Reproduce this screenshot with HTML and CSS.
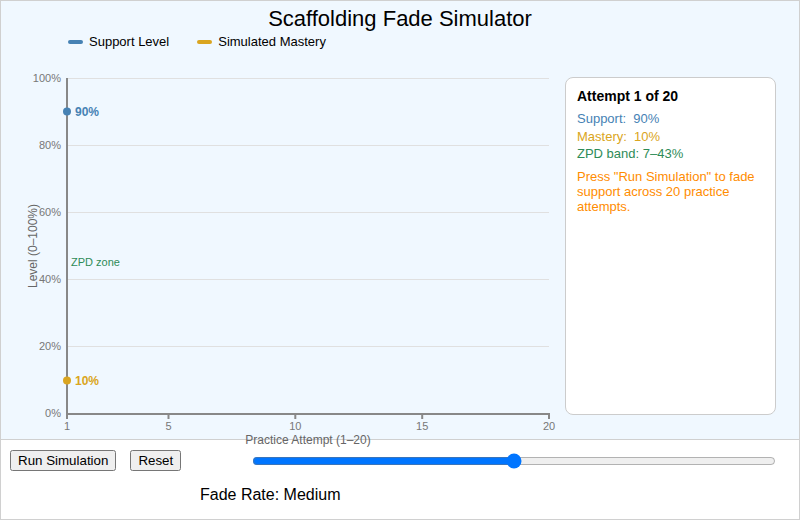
FILE: index.html
```html
<!DOCTYPE html>
<html>
<head>
    <title>Scaffolding Fade Simulator</title>
    <link rel="stylesheet" href="styles.css">
</head>
<body>
    <div class="app">
        <div class="sim-top">
            <h1 class="title">Scaffolding Fade Simulator</h1>

            <div class="legend">
                <span class="swatch support"></span><span class="legend-text">Support Level</span>
                <span class="swatch mastery"></span><span class="legend-text">Simulated Mastery</span>
            </div>

            <div class="chart-row">
                <!-- Chart: x = attempts 1..20, y = level 0..100% -->
                <svg class="chart" width="555" height="388" viewBox="0 0 555 388">
                    <g class="grid">
                        <line x1="66" y1="28.5" x2="548" y2="28.5"/>
                        <line x1="66" y1="95.5" x2="548" y2="95.5"/>
                        <line x1="66" y1="162.5" x2="548" y2="162.5"/>
                        <line x1="66" y1="229.5" x2="548" y2="229.5"/>
                        <line x1="66" y1="296.5" x2="548" y2="296.5"/>
                    </g>

                    <g class="y-ticks">
                        <text x="60" y="32">100%</text>
                        <text x="60" y="99">80%</text>
                        <text x="60" y="166">60%</text>
                        <text x="60" y="233">40%</text>
                        <text x="60" y="300">20%</text>
                        <text x="60" y="367">0%</text>
                    </g>

                    <g class="axis">
                        <line x1="66" y1="28" x2="66" y2="365"/>
                        <line x1="65" y1="364" x2="549" y2="364"/>
                        <line x1="66" y1="364" x2="66" y2="369"/>
                        <line x1="167.5" y1="364" x2="167.5" y2="369"/>
                        <line x1="294.3" y1="364" x2="294.3" y2="369"/>
                        <line x1="421.2" y1="364" x2="421.2" y2="369"/>
                        <line x1="548" y1="364" x2="548" y2="369"/>
                    </g>

                    <g class="x-ticks">
                        <text x="66" y="380">1</text>
                        <text x="167.5" y="380">5</text>
                        <text x="294.3" y="380">10</text>
                        <text x="421.2" y="380">15</text>
                        <text x="548" y="380">20</text>
                    </g>

                    <text class="axis-title" x="307" y="394">Practice Attempt (1–20)</text>
                    <text class="axis-title" transform="translate(36,196) rotate(-90)">Level (0–100%)</text>

                    <text class="zpd-label" x="70" y="216">ZPD zone</text>

                    <circle cx="66" cy="61.6" r="4" fill="#4682b4"/>
                    <text class="point-label support-text" x="74" y="65.5">90%</text>

                    <circle cx="66" cy="330.4" r="4" fill="#daa520"/>
                    <text class="point-label mastery-text" x="74" y="334.5">10%</text>
                </svg>

                <div class="info-panel">
                    <div class="info-title">Attempt 1 of 20</div>
                    <div class="info-line support-text">Support:&nbsp; 90%</div>
                    <div class="info-line mastery-text">Mastery:&nbsp; 10%</div>
                    <div class="info-line zpd-text">ZPD band: 7–43%</div>
                    <div class="info-note">Press "Run Simulation" to fade support across 20 practice attempts.</div>
                </div>
            </div>
        </div>

        <div class="controls">
            <div class="control-row">
                <button id="runBtn">Run Simulation</button>
                <button id="resetBtn">Reset</button>
                <input class="fade-slider" type="range" min="1" max="3" value="2">
            </div>
            <div class="fade-label">Fade Rate: Medium</div>
        </div>
    </div>
</body>
</html>
```

FILE: styles.css
```css
body {
    margin: 0;
    padding: 0;
    font-family: "Liberation Sans", Arial, sans-serif;
}

.app {
    width: 800px;
    height: 520px;
    box-sizing: border-box;
    border: 1px solid #d0d0d0;
    background-color: #ffffff;
}

.sim-top {
    height: 438px;
    background-color: #f0f8ff;
    border-bottom: 1px solid #d0d0d0;
}

.title {
    margin: 0;
    padding-top: 5px;
    font-size: 22px;
    font-weight: normal;
    line-height: 25px;
    text-align: center;
    color: #000000;
}

.legend {
    display: flex;
    align-items: center;
    height: 16px;
    margin-top: 3px;
    padding-left: 67px;
    font-size: 13px;
    line-height: 16px;
}

.swatch {
    display: inline-block;
    width: 15px;
    height: 4px;
    border-radius: 2px;
    margin-right: 6px;
}

.swatch.support {
    background-color: #4682b4;
}

.swatch.mastery {
    background-color: #daa520;
}

.legend-text {
    margin-right: 28px;
    color: #000000;
}

.chart-row {
    display: flex;
    align-items: flex-start;
}

.chart {
    display: block;
    overflow: visible;
    flex-shrink: 0;
}

.grid line {
    stroke: #e0e0e0;
    stroke-width: 1;
}

.axis line {
    stroke: #888888;
    stroke-width: 2;
}

.y-ticks text {
    font-size: 11px;
    fill: #777777;
    text-anchor: end;
}

.x-ticks text {
    font-size: 11px;
    fill: #777777;
    text-anchor: middle;
}

.axis-title {
    font-size: 12px;
    fill: #666666;
    text-anchor: middle;
}

.zpd-label {
    font-size: 11px;
    fill: #2e8b57;
}

.point-label {
    font-size: 12px;
    font-weight: bold;
}

.chart .support-text {
    fill: #4682b4;
}

.chart .mastery-text {
    fill: #daa520;
}

.info-panel {
    box-sizing: border-box;
    width: 211px;
    height: 338px;
    margin-top: 27px;
    margin-left: 9px;
    padding: 10px 11px;
    background-color: #ffffff;
    border: 1px solid #cccccc;
    border-radius: 8px;
}

.info-title {
    font-size: 14px;
    font-weight: bold;
    color: #000000;
    margin-bottom: 6px;
}

.info-line {
    font-size: 13px;
    line-height: 17.5px;
}

.support-text {
    color: #4682b4;
}

.mastery-text {
    color: #daa520;
}

.zpd-text {
    color: #2e8b57;
}

.info-note {
    margin-top: 6px;
    font-size: 13px;
    color: #ff8c00;
}

.controls {
    padding: 10px 9px;
}

.control-row {
    display: flex;
    align-items: center;
}

.control-row button {
    font-family: "Liberation Sans", Arial, sans-serif;
    font-size: 13.33px;
    margin: 0 14px 0 0;
}

.fade-slider {
    width: 524px;
    margin: 0 0 0 57px;
}

.fade-label {
    margin-top: 15px;
    padding-left: 190px;
    font-size: 16px;
    color: #000000;
}
```
